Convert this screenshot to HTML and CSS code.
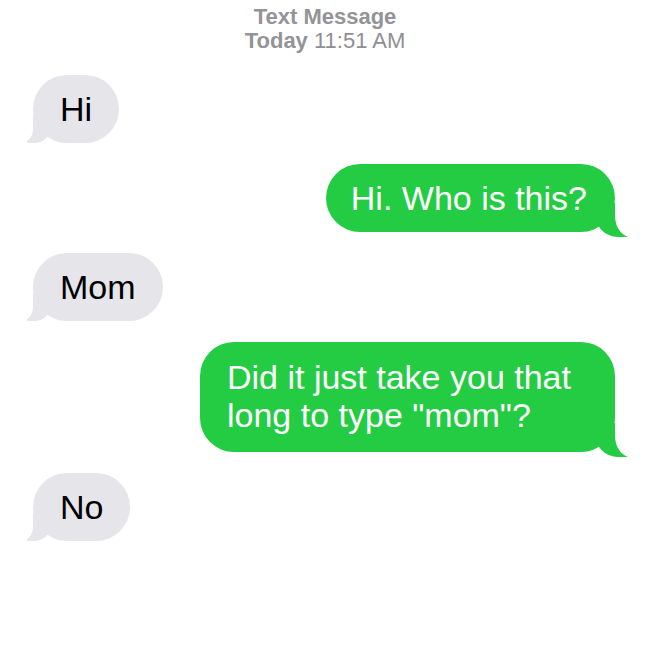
FILE: index.html
```html
<!DOCTYPE html>
<html lang="en">
<head>
  <meta charset="UTF-8" />
  <meta name="viewport" content="width=device-width, initial-scale=1.0"/>
  <title>Text Message</title>
  <link rel="stylesheet" href="styles.css">
</head>
<body>

<div class="thread">
  <div class="thread-head">
    <div><b>Text Message</b></div>
    <div><b>Today</b> 11:51 AM</div>
  </div>

  <div class="msgs">
    <div class="bubble them">Hi</div>
    <div class="bubble me">Hi. Who is this?</div>
    <div class="bubble them">Mom</div>
    <div class="bubble me wide">Did it just take you that long to type "mom"?</div>
    <div class="bubble them">No</div>
  </div>
</div>

</body>
</html>
```

FILE: styles.css
```css
body {
  margin: 0; padding: 0;
  background: #fff;
  font-family: "Liberation Sans", Arial, sans-serif;
}
.thread {
  width: 650px; height: 650px; overflow: hidden;
}
.thread-head {
  padding-top: 5px;
  text-align: center; color: #8e8e93;
  font-size: 22px; line-height: 24px;
}
.thread-head b { font-weight: 700; color: #939398; }
.msgs {
  display: flex; flex-direction: column;
  gap: 21px;
  padding: 22px 35px 0 33px;
}
.bubble {
  position: relative; z-index: 0;
  box-sizing: border-box;
  padding: 15px 27px 15px 27px;
  border-radius: 34px;
  font-size: 34px; line-height: 38px;
  max-width: 415px;
}
.them {
  align-self: flex-start;
  background: #e5e5ea; color: #000;
}
.me {
  align-self: flex-end;
  background: #24cc44; color: #fff;
  padding-right: 28px; padding-left: 25px;
}
.me.wide { padding: 16px 28px 18px 27px; }

/* tails */
.them::before, .them::after,
.me::before, .me::after {
  content: ""; position: absolute; bottom: 0; z-index: -1;
}
.them::before {
  left: -6px; width: 26px; height: 28px;
  background: #e5e5ea;
  border-bottom-right-radius: 18px 22px;
}
.them::after {
  left: -16px; width: 16px; height: 30px;
  background: #fff;
  border-bottom-right-radius: 12px 14px;
}
.me::before {
  right: -13px; bottom: -5px; width: 34px; height: 34px;
  background: #24cc44;
  border-bottom-left-radius: 24px 26px;
}
.me::after {
  right: -30px; bottom: -6px; width: 30px; height: 40px;
  background: #fff;
  border-bottom-left-radius: 18px 22px;
}
```
